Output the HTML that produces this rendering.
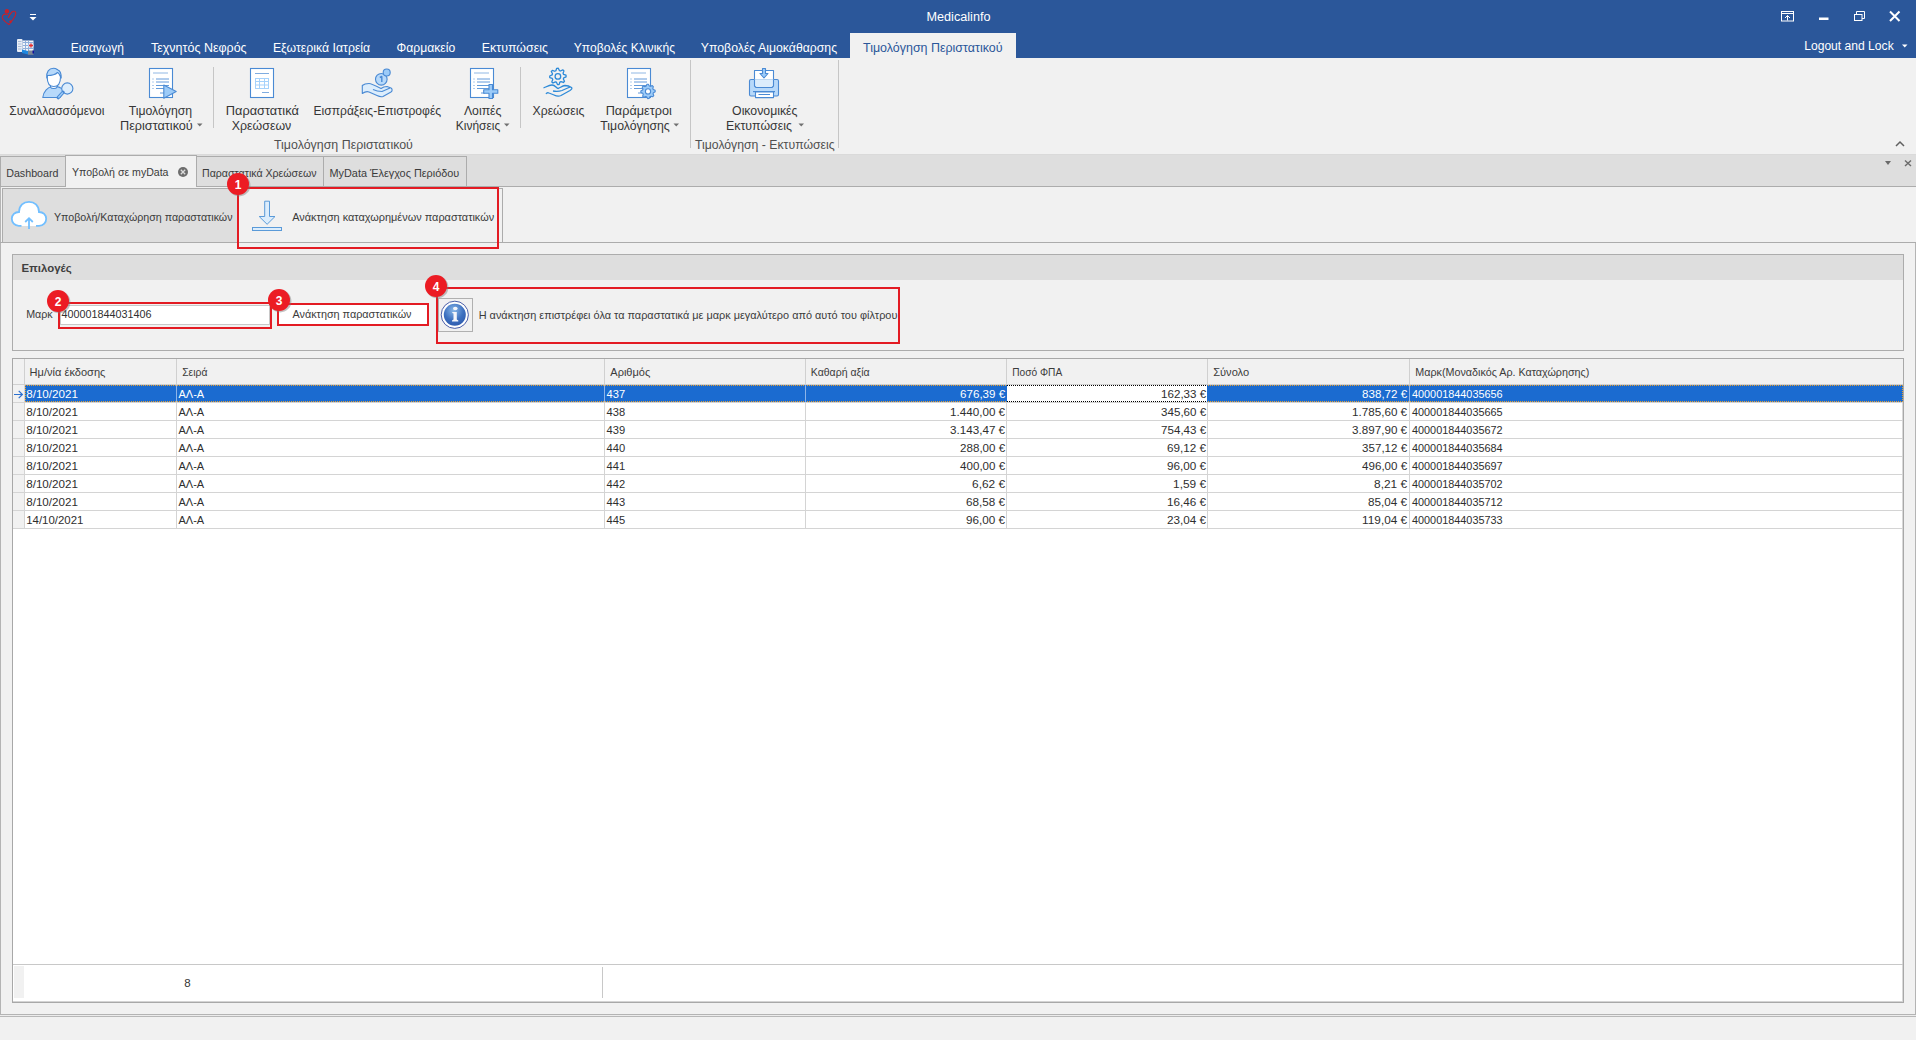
<!DOCTYPE html>
<html><head><meta charset="utf-8"><title>Medicalinfo</title>
<style>
html,body{margin:0;padding:0;width:1916px;height:1040px;overflow:hidden;background:#f1f1f1;}
svg{display:block;font-family:"Liberation Sans",sans-serif;}
svg text{white-space:pre;}
</style></head><body>
<svg width="1916" height="1040" viewBox="0 0 1916 1040">
<rect x="0" y="0" width="1916" height="1040" fill="#f1f1f1" />
<rect x="0" y="0" width="1916" height="58" fill="#2b579a" />
<text x="926.5" y="21" font-size="12.5" fill="#ffffff" text-anchor="start" textLength="64.0" lengthAdjust="spacingAndGlyphs" >Medicalinfo</text>
<g fill="none" stroke="#c8202a" stroke-width="1.1" stroke-linecap="round"><path d="M7.5 14.5 C5 13.5 2 14.5 2.2 17.5 C2.5 20 6 22.5 9 24.5"/><path d="M9 24.5 C12 21 15.5 17 15.8 13.5 C16 11 13.5 10.5 11.5 12.5 C10 14 9 16 8.5 17.5"/></g><circle cx="6.9" cy="11.2" r="2.2" fill="#c8202a"/><circle cx="10.6" cy="21.6" r="1.3" fill="#c8202a"/>
<rect x="30" y="14" width="6" height="1" fill="#ffffff" />
<path d="M29.5 17 L36.5 17 L33 20.5Z" fill="#ffffff"/>
<g fill="none" stroke="#ffffff" stroke-width="1"><rect x="1781.5" y="11.5" width="12" height="9.5"/><line x1="1781.5" y1="13.5" x2="1793.5" y2="13.5"/><path d="M1787.5 20.5 V15.5 M1785 18 L1787.5 15.5 L1790 18"/><rect x="1854.5" y="14.5" width="7.5" height="6"/><path d="M1856.5 14.5 V11.5 H1864.5 V18.5 H1862"/></g><rect x="1819" y="17.5" width="9.5" height="2.5" fill="#ffffff"/><path d="M1890 11.5 L1899.5 21 M1899.5 11.5 L1890 21" stroke="#ffffff" stroke-width="2"/>
<text x="70.8" y="52" font-size="12" fill="#ffffff" text-anchor="start" textLength="53.1" lengthAdjust="spacingAndGlyphs" >Εισαγωγή</text>
<text x="151.0" y="52" font-size="12" fill="#ffffff" text-anchor="start" textLength="95.6" lengthAdjust="spacingAndGlyphs" >Τεχνητός Νεφρός</text>
<text x="272.9" y="52" font-size="12" fill="#ffffff" text-anchor="start" textLength="97.3" lengthAdjust="spacingAndGlyphs" >Εξωτερικά Ιατρεία</text>
<text x="396.5" y="52" font-size="12" fill="#ffffff" text-anchor="start" textLength="58.7" lengthAdjust="spacingAndGlyphs" >Φαρμακείο</text>
<text x="481.8" y="52" font-size="12" fill="#ffffff" text-anchor="start" textLength="66.1" lengthAdjust="spacingAndGlyphs" >Εκτυπώσεις</text>
<text x="573.7" y="52" font-size="12" fill="#ffffff" text-anchor="start" textLength="101.3" lengthAdjust="spacingAndGlyphs" >Υποβολές Κλινικής</text>
<text x="700.8" y="52" font-size="12" fill="#ffffff" text-anchor="start" textLength="136.3" lengthAdjust="spacingAndGlyphs" >Υποβολές Αιμοκάθαρσης</text>
<rect x="850" y="33" width="166" height="25" fill="#f1f1f1" />
<text x="863" y="52" font-size="12" fill="#2b579a" text-anchor="start" textLength="139.5" lengthAdjust="spacingAndGlyphs" >Τιμολόγηση Περιστατικού</text>
<g><rect x="17" y="39" width="5.5" height="13" rx="1" fill="#e8eef7"/><g fill="#a9bcd8"><rect x="18" y="41" width="3.5" height="1"/><rect x="18" y="43.5" width="3.5" height="1"/><rect x="18" y="46" width="3.5" height="1"/><rect x="18" y="48.5" width="3.5" height="1"/></g><rect x="22.5" y="40.5" width="11" height="11" fill="#f2f5fa"/><g fill="#8fb0dc"><rect x="23" y="42" width="10" height="1"/><rect x="23" y="45" width="10" height="1"/><rect x="23" y="48" width="10" height="1"/><rect x="25" y="41" width="1" height="10"/><rect x="28" y="41" width="1" height="10"/></g><circle cx="31" cy="45.5" r="2.6" fill="#cfe0f5"/><path d="M31 43.5 V47.5 M29 45.5 H33" stroke="#e83030" stroke-width="1.3"/><path d="M22 49.5 L28 51 L28 54.5 L22 53Z" fill="#1e88e0"/><rect x="28" y="50.5" width="5.5" height="4.3" fill="#7d8796"/><rect x="32.5" y="50.5" width="1.5" height="3" fill="#1010a0"/></g>
<text x="1804.2" y="50" font-size="12" fill="#ffffff" text-anchor="start" textLength="89.5" lengthAdjust="spacingAndGlyphs" >Logout and Lock</text>
<path d="M1902 44.5 L1907.5 44.5 L1904.75 47.5Z" fill="#ffffff"/>
<rect x="0" y="154" width="1916" height="1" fill="#dadada" />
<rect x="213" y="67" width="1" height="61" fill="#c6c6c6" />
<rect x="520" y="67" width="1" height="61" fill="#c6c6c6" />
<rect x="690" y="60" width="1" height="88" fill="#c6c6c6" />
<rect x="838" y="60" width="1" height="88" fill="#c6c6c6" />
<text x="9.3" y="115" font-size="12" fill="#363636" text-anchor="start" textLength="95.2" lengthAdjust="spacingAndGlyphs" >Συναλλασσόμενοι</text>
<text x="128.7" y="115" font-size="12" fill="#363636" text-anchor="start" textLength="63.5" lengthAdjust="spacingAndGlyphs" >Τιμολόγηση</text>
<text x="120.0" y="129.6" font-size="12" fill="#363636" text-anchor="start" textLength="72.8" lengthAdjust="spacingAndGlyphs" >Περιστατικού</text>
<text x="225.8" y="115" font-size="12" fill="#363636" text-anchor="start" textLength="73.0" lengthAdjust="spacingAndGlyphs" >Παραστατικά</text>
<text x="231.8" y="129.6" font-size="12" fill="#363636" text-anchor="start" textLength="59.5" lengthAdjust="spacingAndGlyphs" >Χρεώσεων</text>
<text x="313.5" y="115" font-size="12" fill="#363636" text-anchor="start" textLength="127.6" lengthAdjust="spacingAndGlyphs" >Εισπράξεις-Επιστροφές</text>
<text x="463.9" y="115" font-size="12" fill="#363636" text-anchor="start" textLength="37.6" lengthAdjust="spacingAndGlyphs" >Λοιπές</text>
<text x="455.8" y="129.6" font-size="12" fill="#363636" text-anchor="start" textLength="44.4" lengthAdjust="spacingAndGlyphs" >Κινήσεις</text>
<text x="532.5" y="115" font-size="12" fill="#363636" text-anchor="start" textLength="51.8" lengthAdjust="spacingAndGlyphs" >Χρεώσεις</text>
<text x="605.7" y="115" font-size="12" fill="#363636" text-anchor="start" textLength="66.1" lengthAdjust="spacingAndGlyphs" >Παράμετροι</text>
<text x="600.3" y="129.6" font-size="12" fill="#363636" text-anchor="start" textLength="69.5" lengthAdjust="spacingAndGlyphs" >Τιμολόγησης</text>
<text x="732.1" y="115" font-size="12" fill="#363636" text-anchor="start" textLength="65.4" lengthAdjust="spacingAndGlyphs" >Οικονομικές</text>
<text x="726.0" y="129.6" font-size="12" fill="#363636" text-anchor="start" textLength="65.9" lengthAdjust="spacingAndGlyphs" >Εκτυπώσεις</text>
<text x="274" y="149" font-size="12" fill="#505050" text-anchor="start" textLength="138.9" lengthAdjust="spacingAndGlyphs" >Τιμολόγηση Περιστατικού</text>
<text x="695" y="149" font-size="12" fill="#505050" text-anchor="start" textLength="139.6" lengthAdjust="spacingAndGlyphs" >Τιμολόγηση - Εκτυπώσεις</text>
<path d="M197 123.5 L202.5 123.5 L199.75 126.5Z" fill="#707070"/>
<path d="M504 123.5 L509.5 123.5 L506.75 126.5Z" fill="#707070"/>
<path d="M673.5 123.5 L679.0 123.5 L676.25 126.5Z" fill="#707070"/>
<path d="M798.5 123.5 L804.0 123.5 L801.25 126.5Z" fill="#707070"/>
<path d="M1896 146 L1900 142 L1904 146" fill="none" stroke="#606060" stroke-width="1.5"/>
<g stroke="#4a8ad4" stroke-width="1.1" stroke-linejoin="round"><path d="M42.8 97.5 C43.5 91 48 87.3 52 86.5 L57 86.5 C60 87.3 63 89 64.5 91 L60 97.5 Z" fill="#b7d9fa"/><path d="M50.5 84 L50.5 87.2 C51.5 89 56 89 57 87.2 L57 84Z" fill="#ffffff"/><path d="M47.2 77 C47.2 83 49.5 86.5 53.8 86.5 C58 86.5 60.5 83 60.5 77 C60.5 72 58 69 53.8 69 C49.5 69 47.2 72 47.2 77Z" fill="#ffffff"/><path d="M46.8 78 C46 72 49 68.3 53.5 68.3 C56 68.3 57 69.5 58 70 C60.5 71 61.3 73 61.2 78 C59.8 75 59 73 57.5 72.5 C55 75 51.5 75.5 47.5 75.5Z" fill="#b7d9fa"/><circle cx="67.3" cy="88.5" r="5.6" fill="#dcedfc"/><path d="M63 92.3 L58.2 97.6" stroke-width="3.4" stroke="#4a8ad4" stroke-linecap="round"/><path d="M62.8 92.5 L58.4 97.4" stroke-width="1.5" stroke="#9ccbf8"/></g>
<rect x="149.5" y="68.5" width="23" height="29" fill="#ffffff" stroke="#4a8ad4" stroke-width="1.1"/><g stroke="#4a8ad4" stroke-width="1" opacity="0.85"><line x1="153" y1="73" x2="168" y2="73" opacity="0.7"/><line x1="152.5" y1="79" x2="153.5" y2="79"/><line x1="156" y1="79" x2="169" y2="79"/><line x1="152.5" y1="82" x2="153.5" y2="82"/><line x1="156" y1="82" x2="169" y2="82"/><line x1="152.5" y1="85.5" x2="153.5" y2="85.5"/><line x1="156" y1="85.5" x2="169" y2="85.5"/><line x1="152.5" y1="88.5" x2="153.5" y2="88.5"/><line x1="156" y1="88.5" x2="169" y2="88.5"/><line x1="160" y1="93" x2="164" y2="93"/></g>
<path d="M163.8 85 L176.2 91.6 L163.8 98.2Z" fill="#9ccbf8" stroke="#4a8ad4" stroke-width="1.1" stroke-linejoin="round"/>
<rect x="250.5" y="68.5" width="23" height="29" fill="#ffffff" stroke="#4a8ad4" stroke-width="1.1"/><line x1="255" y1="73.5" x2="269" y2="73.5" stroke="#4a8ad4" stroke-width="1" opacity="0.7"/><line x1="262" y1="92.5" x2="269" y2="92.5" stroke="#4a8ad4" stroke-width="1" opacity="0.7"/><g fill="#a6d2fb"><rect x="255" y="78" width="14" height="1"/><rect x="255" y="81" width="14" height="1"/><rect x="255" y="84.5" width="14" height="1"/><rect x="255" y="88" width="14" height="1"/><rect x="255" y="78" width="1" height="11"/><rect x="259" y="78" width="1" height="11"/><rect x="264" y="78" width="1" height="11"/><rect x="268" y="78" width="1" height="11"/></g>
<g stroke="#4a8ad4" stroke-width="1.1" stroke-linejoin="round"><path d="M362.3 85.5 C364 84 366 83.5 369 83.5 C371 83.5 378 87 381 88.5 C383 87 385 86.5 387 86.5 L391 88 C392.5 89 392.5 91 391 92 L383 96.5 C381 97 380 97 377 95.5 L369 92 C366.5 91 364.5 92 362.3 93.5Z" fill="#dcedfc"/><path d="M373 89.5 C376 91 378 91.5 382 91.5 L390 88" fill="none"/><circle cx="381.3" cy="79.3" r="5.8" fill="#b7d9fa"/><circle cx="386.7" cy="72.5" r="3.5" fill="#9ccbf8"/><path d="M379.8 77.5 L381.8 76.5 L381.8 82" fill="none" stroke-width="1.4"/></g>
<rect x="470.5" y="68.5" width="23" height="29" fill="#ffffff" stroke="#4a8ad4" stroke-width="1.1"/><g stroke="#4a8ad4" stroke-width="1" opacity="0.85"><line x1="474" y1="73" x2="489" y2="73" opacity="0.7"/><line x1="473.5" y1="79" x2="474.5" y2="79"/><line x1="477" y1="79" x2="490" y2="79"/><line x1="473.5" y1="82" x2="474.5" y2="82"/><line x1="477" y1="82" x2="490" y2="82"/><line x1="473.5" y1="85.5" x2="474.5" y2="85.5"/><line x1="477" y1="85.5" x2="490" y2="85.5"/><line x1="473.5" y1="88.5" x2="474.5" y2="88.5"/><line x1="477" y1="88.5" x2="490" y2="88.5"/><line x1="481" y1="93" x2="485" y2="93"/></g>
<path d="M489 84.5 L492.5 84.5 L492.5 89.8 L497.8 89.8 L497.8 93.2 L492.5 93.2 L492.5 98.5 L489 98.5 L489 93.2 L483.7 93.2 L483.7 89.8 L489 89.8Z" fill="#9ccbf8" stroke="#4a8ad4" stroke-width="1.1" stroke-linejoin="round"/>
<g fill="none" stroke="#2d8ad8" stroke-width="1.3" stroke-linejoin="round"><path d="M556.70,68.29 L558.30,68.21 L559.36,70.58 L560.47,70.98 L562.78,69.81 L563.98,70.89 L563.05,73.32 L563.55,74.38 L566.01,75.20 L566.09,76.80 L563.72,77.86 L563.32,78.97 L564.49,81.28 L563.41,82.48 L560.98,81.55 L559.92,82.05 L559.10,84.51 L557.50,84.59 L556.44,82.22 L555.33,81.82 L553.02,82.99 L551.82,81.91 L552.75,79.48 L552.25,78.42 L549.79,77.60 L549.71,76.00 L552.08,74.94 L552.48,73.83 L551.31,71.52 L552.39,70.32 L554.82,71.25 L555.88,70.75Z"/><circle cx="557.9" cy="76.4" r="2.8"/><path d="M543.5 88 C546 87 549 85 552 85 C555 85 556.5 88 558 88.5 C560 88 562 86 565 85.5 C567 85.5 570 86.5 571.5 87.5 C572.5 88.5 571.5 89.5 570 90.5 L561 95.5 C559 96.5 557 96.5 554 95 L549 93 C548 92.5 546.5 93 546 94"/><path d="M553 91 C556 91.5 559 91.5 562 90.5 L570 87"/></g>
<rect x="627.5" y="68.5" width="23" height="29" fill="#ffffff" stroke="#4a8ad4" stroke-width="1.1"/><g stroke="#4a8ad4" stroke-width="1" opacity="0.85"><line x1="631" y1="73" x2="646" y2="73" opacity="0.7"/><line x1="630.5" y1="79" x2="631.5" y2="79"/><line x1="634" y1="79" x2="647" y2="79"/><line x1="630.5" y1="82" x2="631.5" y2="82"/><line x1="634" y1="82" x2="647" y2="82"/><line x1="630.5" y1="85.5" x2="631.5" y2="85.5"/><line x1="634" y1="85.5" x2="647" y2="85.5"/><line x1="630.5" y1="88.5" x2="631.5" y2="88.5"/><line x1="634" y1="88.5" x2="647" y2="88.5"/><line x1="638" y1="93" x2="642" y2="93"/></g>
<path d="M646.94,84.28 L648.35,84.21 L649.36,85.97 L650.39,86.34 L652.29,85.62 L653.33,86.56 L652.80,88.52 L653.27,89.51 L655.12,90.34 L655.19,91.75 L653.43,92.76 L653.06,93.79 L653.78,95.69 L652.84,96.73 L650.88,96.20 L649.89,96.67 L649.06,98.52 L647.65,98.59 L646.64,96.83 L645.61,96.46 L643.71,97.18 L642.67,96.24 L643.20,94.28 L642.73,93.29 L640.88,92.46 L640.81,91.05 L642.57,90.04 L642.94,89.01 L642.22,87.11 L643.16,86.07 L645.12,86.60 L646.11,86.13Z" fill="#9ccbf8" stroke="#4a8ad4" stroke-width="1.1" stroke-linejoin="round"/><circle cx="648" cy="91.4" r="2.6" fill="#ffffff" stroke="#4a8ad4" stroke-width="1.1"/>
<g stroke="#4a8ad4" stroke-width="1.1" stroke-linejoin="round"><rect x="749.5" y="79.5" width="29" height="16.5" rx="1.5" fill="#b7d9fa"/><path d="M754.5 79.5 L754.5 70.5 L773.5 70.5 L773.5 79.5" fill="#ffffff"/><path d="M754.5 79.5 L754.5 86 L756 87.5 L772 87.5 L773.5 86 L773.5 79.5" fill="#dcedfc"/><rect x="753" y="91" width="22" height="1.2" fill="#4a8ad4" stroke="none"/><rect x="755.5" y="92" width="18" height="5.6" fill="#ffffff"/><line x1="758.5" y1="94.5" x2="770" y2="94.5" stroke-width="1"/><path d="M762.5 68.5 L765.5 68.5 L765.5 73.5 L768 73.5 L764 78 L760 73.5 L762.5 73.5Z" fill="#9ccbf8"/></g>
<rect x="0" y="155" width="1916" height="31" fill="#dedede" />
<rect x="0" y="186" width="1916" height="1" fill="#acacac" />
<rect x="0" y="156" width="66" height="31" fill="#dedede" />
<rect x="0" y="156" width="66" height="1" fill="#acacac" />
<rect x="0" y="186" width="66" height="1" fill="#acacac" />
<rect x="0" y="156" width="1" height="31" fill="#acacac" />
<rect x="65" y="156" width="1" height="31" fill="#acacac" />
<rect x="196" y="156" width="128" height="31" fill="#dedede" />
<rect x="196" y="156" width="128" height="1" fill="#acacac" />
<rect x="196" y="186" width="128" height="1" fill="#acacac" />
<rect x="196" y="156" width="1" height="31" fill="#acacac" />
<rect x="323" y="156" width="1" height="31" fill="#acacac" />
<rect x="323" y="156" width="144" height="31" fill="#dedede" />
<rect x="323" y="156" width="144" height="1" fill="#acacac" />
<rect x="323" y="186" width="144" height="1" fill="#acacac" />
<rect x="323" y="156" width="1" height="31" fill="#acacac" />
<rect x="466" y="156" width="1" height="31" fill="#acacac" />
<rect x="65" y="155" width="132" height="32" fill="#f1f1f1" />
<rect x="65" y="155" width="132" height="1" fill="#acacac" />
<rect x="65" y="155" width="1" height="32" fill="#acacac" />
<rect x="196" y="155" width="1" height="32" fill="#acacac" />
<text x="6.2" y="177" font-size="11" fill="#3b3b3b" text-anchor="start" textLength="52.3" lengthAdjust="spacingAndGlyphs" >Dashboard</text>
<text x="72" y="176" font-size="11" fill="#3b3b3b" text-anchor="start" textLength="96.5" lengthAdjust="spacingAndGlyphs" >Υποβολή σε myData</text>
<text x="202" y="177" font-size="11" fill="#3b3b3b" text-anchor="start" textLength="114.5" lengthAdjust="spacingAndGlyphs" >Παραστατικά Χρεώσεων</text>
<text x="329.5" y="177" font-size="11" fill="#3b3b3b" text-anchor="start" textLength="129.8" lengthAdjust="spacingAndGlyphs" >MyData Έλεγχος Περιόδου</text>
<circle cx="183" cy="172" r="5" fill="#6d6d6d"/><path d="M180.8 169.8 L185.2 174.2 M185.2 169.8 L180.8 174.2" stroke="#dcdcdc" stroke-width="1.3"/>
<path d="M1885 161 L1891 161 L1888 165Z" fill="#6a6a6a"/>
<path d="M1905 160.5 L1911 166 M1911 160.5 L1905 166" stroke="#6a6a6a" stroke-width="1.4"/>
<rect x="0" y="187" width="1916" height="827" fill="#f1f1f1" />
<rect x="0" y="187" width="1" height="828" fill="#b4b4b4" />
<rect x="1915" y="242" width="1" height="773" fill="#b4b4b4" />
<rect x="0" y="242" width="1916" height="1" fill="#acacac" />
<rect x="0" y="1014" width="1916" height="1" fill="#b4b4b4" />
<rect x="0" y="1016" width="1916" height="1" fill="#b8b8b8" />
<rect x="0" y="1015" width="1916" height="1" fill="#ececec" />
<rect x="2" y="188" width="501" height="55" fill="#dedede" />
<rect x="2" y="188" width="501" height="1" fill="#acacac" />
<rect x="2" y="242" width="501" height="1" fill="#acacac" />
<rect x="2" y="188" width="1" height="55" fill="#acacac" />
<rect x="502" y="188" width="1" height="55" fill="#acacac" />
<rect x="238" y="189" width="264" height="53" fill="#f1f1f1" />
<path d="M19 226 C14.5 226 11.8 222.5 11.8 218.8 C11.8 215 14.8 212 19 212 C19.2 205.5 23.5 201.8 29 201.8 C34.5 201.8 38.8 205.5 39 212 C43.2 212 46.2 215 46.2 218.8 C46.2 222.5 43.5 226 39 226 Z" fill="#ffffff"/><path d="M21.5 225.8 L18.8 225.8 C14.5 225.8 11.8 222.5 11.8 218.8 C11.8 215 14.8 212 19 212 C19.2 205.5 23.5 201.8 29 201.8 C34.5 201.8 38.8 205.5 39 212 C43.2 212 46.2 215 46.2 218.8 C46.2 222.5 43.5 225.8 39 225.8 L36 225.8" fill="none" stroke="#72bfff" stroke-width="1.8"/><path d="M29 229 L29 218.5 M25.2 222 L29 218.2 L32.8 222" fill="none" stroke="#72bfff" stroke-width="1.8"/>
<text x="54" y="221" font-size="11" fill="#3b3b3b" text-anchor="start" textLength="178.5" lengthAdjust="spacingAndGlyphs" >Υποβολή/Καταχώρηση παραστατικών</text>
<path d="M264.7 201.2 L269.5 201.2 L269.5 216.5 L275 216.5 L267.1 224.3 L259.2 216.5 L264.7 216.5Z" fill="#dcedfc" stroke="#5a9ad8" stroke-width="1"/><rect x="252.5" y="227.5" width="29" height="3" fill="#dcedfc" stroke="#5a9ad8" stroke-width="1"/>
<text x="292.2" y="221" font-size="11" fill="#3b3b3b" text-anchor="start" textLength="202.0" lengthAdjust="spacingAndGlyphs" >Ανάκτηση καταχωρημένων παραστατικών</text>
<rect x="12" y="254" width="1892" height="97" fill="#f1f1f1" />
<rect x="12" y="254" width="1892" height="1" fill="#acacac" />
<rect x="12" y="350" width="1892" height="1" fill="#acacac" />
<rect x="12" y="254" width="1" height="97" fill="#acacac" />
<rect x="1903" y="254" width="1" height="97" fill="#acacac" />
<rect x="13" y="255" width="1890" height="25" fill="#dedede" />
<text x="21.5" y="271.5" font-size="11" fill="#404040" font-weight="bold" text-anchor="start" textLength="50.2" lengthAdjust="spacingAndGlyphs" >Επιλογές</text>
<text x="26.2" y="318" font-size="11" fill="#3b3b3b" text-anchor="start" textLength="26.5" lengthAdjust="spacingAndGlyphs" >Μαρκ</text>
<rect x="60" y="305" width="210" height="20" fill="#ffffff" />
<rect x="60" y="305" width="210" height="1" fill="#c8c8c8" />
<rect x="60" y="324" width="210" height="1" fill="#c8c8c8" />
<rect x="60" y="305" width="1" height="20" fill="#c8c8c8" />
<rect x="269" y="305" width="1" height="20" fill="#c8c8c8" />
<text x="61.5" y="318" font-size="11" fill="#303030" text-anchor="start" textLength="90.0" lengthAdjust="spacingAndGlyphs" >400001844031406</text>
<rect x="279" y="305" width="149" height="19" fill="#ffffff" />
<text x="292.5" y="318" font-size="11" fill="#3b3b3b" text-anchor="start" textLength="119.0" lengthAdjust="spacingAndGlyphs" >Ανάκτηση παραστατικών</text>
<rect x="438" y="298" width="35" height="34" fill="#f1f1f1" />
<rect x="438" y="298" width="35" height="1" fill="#b0b0b0" />
<rect x="438" y="331" width="35" height="1" fill="#b0b0b0" />
<rect x="438" y="298" width="1" height="34" fill="#b0b0b0" />
<rect x="472" y="298" width="1" height="34" fill="#b0b0b0" />
<defs><radialGradient id="ig" cx="0.45" cy="0.3" r="0.8"><stop offset="0" stop-color="#8ab8e8"/><stop offset="0.55" stop-color="#3c70c0"/><stop offset="1" stop-color="#2c55a8"/></radialGradient></defs><circle cx="454.8" cy="314.8" r="13.6" fill="#ffffff" stroke="#4a5ea8" stroke-width="1"/><circle cx="454.8" cy="314.8" r="11" fill="url(#ig)"/><ellipse cx="455.3" cy="308.5" rx="2.3" ry="1.7" fill="#f4f6fb"/><path d="M452.3 312 L456.8 312 L456.8 319.5 L458.3 320.6 L458.3 321.5 L452 321.5 L452 320.6 L453.5 319.5 L453.5 313.5 L452.3 313Z" fill="#f4f6fb"/>
<text x="478.7" y="319" font-size="11" fill="#3b3b3b" text-anchor="start" textLength="418.7" lengthAdjust="spacingAndGlyphs" >Η ανάκτηση επιστρέφει όλα τα παραστατικά με μαρκ μεγαλύτερο από αυτό του φίλτρου</text>
<rect x="12" y="358" width="1892" height="645" fill="#ffffff" />
<rect x="12" y="358" width="1892" height="1" fill="#a8a8a8" />
<rect x="12" y="1002" width="1892" height="1" fill="#a8a8a8" />
<rect x="12" y="358" width="1" height="645" fill="#a8a8a8" />
<rect x="1903" y="358" width="1" height="645" fill="#a8a8a8" />
<rect x="1902" y="359" width="1" height="643" fill="#d8d8d8" />
<rect x="13" y="1001" width="1890" height="1" fill="#d4d4d4" />
<rect x="13" y="359" width="1890" height="26" fill="#f1f1f1" />
<rect x="24" y="359" width="1" height="26" fill="#d0d0d0" />
<rect x="176" y="359" width="1" height="26" fill="#d0d0d0" />
<rect x="604" y="359" width="1" height="26" fill="#d0d0d0" />
<rect x="805" y="359" width="1" height="26" fill="#d0d0d0" />
<rect x="1006" y="359" width="1" height="26" fill="#d0d0d0" />
<rect x="1207" y="359" width="1" height="26" fill="#d0d0d0" />
<rect x="1409" y="359" width="1" height="26" fill="#d0d0d0" />
<rect x="13" y="384" width="1890" height="1" fill="#d0d0d0" />
<text x="29.6" y="375.7" font-size="11" fill="#3b3b3b" text-anchor="start" textLength="75.8" lengthAdjust="spacingAndGlyphs" >Ημ/νία έκδοσης</text>
<text x="182.2" y="375.7" font-size="11" fill="#3b3b3b" text-anchor="start" textLength="25.2" lengthAdjust="spacingAndGlyphs" >Σειρά</text>
<text x="610.3" y="375.7" font-size="11" fill="#3b3b3b" text-anchor="start" textLength="40.0" lengthAdjust="spacingAndGlyphs" >Αριθμός</text>
<text x="810.8" y="375.7" font-size="11" fill="#3b3b3b" text-anchor="start" textLength="58.8" lengthAdjust="spacingAndGlyphs" >Καθαρή αξία</text>
<text x="1012.2" y="375.7" font-size="11" fill="#3b3b3b" text-anchor="start" textLength="50.0" lengthAdjust="spacingAndGlyphs" >Ποσό ΦΠΑ</text>
<text x="1213.2" y="375.7" font-size="11" fill="#3b3b3b" text-anchor="start" textLength="36.0" lengthAdjust="spacingAndGlyphs" >Σύνολο</text>
<text x="1415.3" y="375.7" font-size="11" fill="#3b3b3b" text-anchor="start" textLength="174.0" lengthAdjust="spacingAndGlyphs" >Μαρκ(Μοναδικός Αρ. Καταχώρησης)</text>
<rect x="13" y="385" width="11" height="144" fill="#f1f1f1" />
<rect x="13" y="402" width="1890" height="1" fill="#d4d4d4" />
<rect x="13" y="420" width="1890" height="1" fill="#d4d4d4" />
<rect x="13" y="438" width="1890" height="1" fill="#d4d4d4" />
<rect x="13" y="456" width="1890" height="1" fill="#d4d4d4" />
<rect x="13" y="474" width="1890" height="1" fill="#d4d4d4" />
<rect x="13" y="492" width="1890" height="1" fill="#d4d4d4" />
<rect x="13" y="510" width="1890" height="1" fill="#d4d4d4" />
<rect x="13" y="528" width="1890" height="1" fill="#d4d4d4" />
<rect x="24" y="385" width="1" height="144" fill="#d4d4d4" />
<rect x="176" y="385" width="1" height="144" fill="#d4d4d4" />
<rect x="604" y="385" width="1" height="144" fill="#d4d4d4" />
<rect x="805" y="385" width="1" height="144" fill="#d4d4d4" />
<rect x="1006" y="385" width="1" height="144" fill="#d4d4d4" />
<rect x="1207" y="385" width="1" height="144" fill="#d4d4d4" />
<rect x="1409" y="385" width="1" height="144" fill="#d4d4d4" />
<rect x="25" y="385" width="1878" height="17" fill="#1b6bd0" />
<rect x="1007" y="385" width="200" height="17" fill="#ffffff" />
<g shape-rendering="crispEdges"><line x1="25" y1="385.5" x2="1006" y2="385.5" stroke="#e8a030" stroke-width="1" stroke-dasharray="1,1"/><line x1="25" y1="401.5" x2="1006" y2="401.5" stroke="#e8a030" stroke-width="1" stroke-dasharray="1,1"/><line x1="1208" y1="385.5" x2="1903" y2="385.5" stroke="#e8a030" stroke-width="1" stroke-dasharray="1,1"/><line x1="1208" y1="401.5" x2="1903" y2="401.5" stroke="#e8a030" stroke-width="1" stroke-dasharray="1,1"/><line x1="1902.5" y1="385" x2="1902.5" y2="402" stroke="#e8a030" stroke-width="1" stroke-dasharray="1,1"/><line x1="25.5" y1="385" x2="25.5" y2="402" stroke="#e8a030" stroke-width="1" stroke-dasharray="1,1"/><line x1="1007" y1="385.5" x2="1207" y2="385.5" stroke="#000" stroke-width="1" stroke-dasharray="1,1"/><line x1="1007" y1="401.5" x2="1207" y2="401.5" stroke="#000" stroke-width="1" stroke-dasharray="1,1"/></g>
<rect x="176" y="385" width="1" height="17" fill="#8db4e8" />
<rect x="604" y="385" width="1" height="17" fill="#8db4e8" />
<rect x="805" y="385" width="1" height="17" fill="#8db4e8" />
<rect x="1409" y="385" width="1" height="17" fill="#8db4e8" />
<path d="M14 394.5 L22.3 394.5 M18.7 390.8 L22.4 394.5 L18.7 398.2" fill="none" stroke="#2a6fd0" stroke-width="1.2"/>
<text x="26.2" y="398" font-size="11" fill="#ffffff" text-anchor="start" textLength="51.8" lengthAdjust="spacingAndGlyphs" >8/10/2021</text>
<text x="178.5" y="398" font-size="11" fill="#ffffff" text-anchor="start" >ΑΛ-Α</text>
<text x="606.5" y="398" font-size="11" fill="#ffffff" text-anchor="start" textLength="18.6" lengthAdjust="spacingAndGlyphs" >437</text>
<text x="1005.1" y="398" font-size="11" fill="#ffffff" text-anchor="end" textLength="45.0" lengthAdjust="spacingAndGlyphs" >676,39 €</text>
<text x="1206.1" y="398" font-size="11" fill="#2e2e2e" text-anchor="end" textLength="45.0" lengthAdjust="spacingAndGlyphs" >162,33 €</text>
<text x="1407.1" y="398" font-size="11" fill="#ffffff" text-anchor="end" textLength="45.0" lengthAdjust="spacingAndGlyphs" >838,72 €</text>
<text x="1412" y="398" font-size="11" fill="#ffffff" text-anchor="start" textLength="90.6" lengthAdjust="spacingAndGlyphs" >400001844035656</text>
<text x="26.2" y="416" font-size="11" fill="#2e2e2e" text-anchor="start" textLength="51.8" lengthAdjust="spacingAndGlyphs" >8/10/2021</text>
<text x="178.5" y="416" font-size="11" fill="#2e2e2e" text-anchor="start" >ΑΛ-Α</text>
<text x="606.5" y="416" font-size="11" fill="#2e2e2e" text-anchor="start" textLength="18.6" lengthAdjust="spacingAndGlyphs" >438</text>
<text x="1005.1" y="416" font-size="11" fill="#2e2e2e" text-anchor="end" textLength="55.0" lengthAdjust="spacingAndGlyphs" >1.440,00 €</text>
<text x="1206.1" y="416" font-size="11" fill="#2e2e2e" text-anchor="end" textLength="45.0" lengthAdjust="spacingAndGlyphs" >345,60 €</text>
<text x="1407.1" y="416" font-size="11" fill="#2e2e2e" text-anchor="end" textLength="55.0" lengthAdjust="spacingAndGlyphs" >1.785,60 €</text>
<text x="1412" y="416" font-size="11" fill="#2e2e2e" text-anchor="start" textLength="90.6" lengthAdjust="spacingAndGlyphs" >400001844035665</text>
<text x="26.2" y="434" font-size="11" fill="#2e2e2e" text-anchor="start" textLength="51.8" lengthAdjust="spacingAndGlyphs" >8/10/2021</text>
<text x="178.5" y="434" font-size="11" fill="#2e2e2e" text-anchor="start" >ΑΛ-Α</text>
<text x="606.5" y="434" font-size="11" fill="#2e2e2e" text-anchor="start" textLength="18.6" lengthAdjust="spacingAndGlyphs" >439</text>
<text x="1005.1" y="434" font-size="11" fill="#2e2e2e" text-anchor="end" textLength="55.0" lengthAdjust="spacingAndGlyphs" >3.143,47 €</text>
<text x="1206.1" y="434" font-size="11" fill="#2e2e2e" text-anchor="end" textLength="45.0" lengthAdjust="spacingAndGlyphs" >754,43 €</text>
<text x="1407.1" y="434" font-size="11" fill="#2e2e2e" text-anchor="end" textLength="55.0" lengthAdjust="spacingAndGlyphs" >3.897,90 €</text>
<text x="1412" y="434" font-size="11" fill="#2e2e2e" text-anchor="start" textLength="90.6" lengthAdjust="spacingAndGlyphs" >400001844035672</text>
<text x="26.2" y="452" font-size="11" fill="#2e2e2e" text-anchor="start" textLength="51.8" lengthAdjust="spacingAndGlyphs" >8/10/2021</text>
<text x="178.5" y="452" font-size="11" fill="#2e2e2e" text-anchor="start" >ΑΛ-Α</text>
<text x="606.5" y="452" font-size="11" fill="#2e2e2e" text-anchor="start" textLength="18.6" lengthAdjust="spacingAndGlyphs" >440</text>
<text x="1005.1" y="452" font-size="11" fill="#2e2e2e" text-anchor="end" textLength="45.0" lengthAdjust="spacingAndGlyphs" >288,00 €</text>
<text x="1206.1" y="452" font-size="11" fill="#2e2e2e" text-anchor="end" textLength="39.0" lengthAdjust="spacingAndGlyphs" >69,12 €</text>
<text x="1407.1" y="452" font-size="11" fill="#2e2e2e" text-anchor="end" textLength="45.0" lengthAdjust="spacingAndGlyphs" >357,12 €</text>
<text x="1412" y="452" font-size="11" fill="#2e2e2e" text-anchor="start" textLength="90.6" lengthAdjust="spacingAndGlyphs" >400001844035684</text>
<text x="26.2" y="470" font-size="11" fill="#2e2e2e" text-anchor="start" textLength="51.8" lengthAdjust="spacingAndGlyphs" >8/10/2021</text>
<text x="178.5" y="470" font-size="11" fill="#2e2e2e" text-anchor="start" >ΑΛ-Α</text>
<text x="606.5" y="470" font-size="11" fill="#2e2e2e" text-anchor="start" textLength="18.6" lengthAdjust="spacingAndGlyphs" >441</text>
<text x="1005.1" y="470" font-size="11" fill="#2e2e2e" text-anchor="end" textLength="45.0" lengthAdjust="spacingAndGlyphs" >400,00 €</text>
<text x="1206.1" y="470" font-size="11" fill="#2e2e2e" text-anchor="end" textLength="39.0" lengthAdjust="spacingAndGlyphs" >96,00 €</text>
<text x="1407.1" y="470" font-size="11" fill="#2e2e2e" text-anchor="end" textLength="45.0" lengthAdjust="spacingAndGlyphs" >496,00 €</text>
<text x="1412" y="470" font-size="11" fill="#2e2e2e" text-anchor="start" textLength="90.6" lengthAdjust="spacingAndGlyphs" >400001844035697</text>
<text x="26.2" y="488" font-size="11" fill="#2e2e2e" text-anchor="start" textLength="51.8" lengthAdjust="spacingAndGlyphs" >8/10/2021</text>
<text x="178.5" y="488" font-size="11" fill="#2e2e2e" text-anchor="start" >ΑΛ-Α</text>
<text x="606.5" y="488" font-size="11" fill="#2e2e2e" text-anchor="start" textLength="18.6" lengthAdjust="spacingAndGlyphs" >442</text>
<text x="1005.1" y="488" font-size="11" fill="#2e2e2e" text-anchor="end" textLength="33.0" lengthAdjust="spacingAndGlyphs" >6,62 €</text>
<text x="1206.1" y="488" font-size="11" fill="#2e2e2e" text-anchor="end" textLength="33.0" lengthAdjust="spacingAndGlyphs" >1,59 €</text>
<text x="1407.1" y="488" font-size="11" fill="#2e2e2e" text-anchor="end" textLength="33.0" lengthAdjust="spacingAndGlyphs" >8,21 €</text>
<text x="1412" y="488" font-size="11" fill="#2e2e2e" text-anchor="start" textLength="90.6" lengthAdjust="spacingAndGlyphs" >400001844035702</text>
<text x="26.2" y="506" font-size="11" fill="#2e2e2e" text-anchor="start" textLength="51.8" lengthAdjust="spacingAndGlyphs" >8/10/2021</text>
<text x="178.5" y="506" font-size="11" fill="#2e2e2e" text-anchor="start" >ΑΛ-Α</text>
<text x="606.5" y="506" font-size="11" fill="#2e2e2e" text-anchor="start" textLength="18.6" lengthAdjust="spacingAndGlyphs" >443</text>
<text x="1005.1" y="506" font-size="11" fill="#2e2e2e" text-anchor="end" textLength="39.0" lengthAdjust="spacingAndGlyphs" >68,58 €</text>
<text x="1206.1" y="506" font-size="11" fill="#2e2e2e" text-anchor="end" textLength="39.0" lengthAdjust="spacingAndGlyphs" >16,46 €</text>
<text x="1407.1" y="506" font-size="11" fill="#2e2e2e" text-anchor="end" textLength="39.0" lengthAdjust="spacingAndGlyphs" >85,04 €</text>
<text x="1412" y="506" font-size="11" fill="#2e2e2e" text-anchor="start" textLength="90.6" lengthAdjust="spacingAndGlyphs" >400001844035712</text>
<text x="26.2" y="524" font-size="11" fill="#2e2e2e" text-anchor="start" textLength="57.2" lengthAdjust="spacingAndGlyphs" >14/10/2021</text>
<text x="178.5" y="524" font-size="11" fill="#2e2e2e" text-anchor="start" >ΑΛ-Α</text>
<text x="606.5" y="524" font-size="11" fill="#2e2e2e" text-anchor="start" textLength="18.6" lengthAdjust="spacingAndGlyphs" >445</text>
<text x="1005.1" y="524" font-size="11" fill="#2e2e2e" text-anchor="end" textLength="39.0" lengthAdjust="spacingAndGlyphs" >96,00 €</text>
<text x="1206.1" y="524" font-size="11" fill="#2e2e2e" text-anchor="end" textLength="39.0" lengthAdjust="spacingAndGlyphs" >23,04 €</text>
<text x="1407.1" y="524" font-size="11" fill="#2e2e2e" text-anchor="end" textLength="45.0" lengthAdjust="spacingAndGlyphs" >119,04 €</text>
<text x="1412" y="524" font-size="11" fill="#2e2e2e" text-anchor="start" textLength="90.6" lengthAdjust="spacingAndGlyphs" >400001844035733</text>
<rect x="13" y="964" width="1890" height="1" fill="#c8c8c8" />
<rect x="14" y="966" width="10" height="32" fill="#f1f1f1" />
<rect x="602" y="967" width="1" height="31" fill="#c8c8c8" />
<text x="184.2" y="987" font-size="11" fill="#333333" text-anchor="start" textLength="6.4" lengthAdjust="spacingAndGlyphs" >8</text>
<rect x="238" y="188" width="260" height="60" fill="none" stroke="#e31b23" stroke-width="2"/>
<rect x="59" y="303" width="212" height="25" fill="none" stroke="#e31b23" stroke-width="2"/>
<rect x="278" y="304" width="150" height="21" fill="none" stroke="#e31b23" stroke-width="2"/>
<rect x="437" y="288" width="462" height="55" fill="none" stroke="#e31b23" stroke-width="2"/>
<circle cx="239.2" cy="185.2" r="11.2" fill="#7a7a7a" opacity="0.45"/><circle cx="238" cy="184" r="11" fill="#ec1c24"/><text x="238" y="188.5" font-size="12" font-weight="bold" fill="#ffffff" text-anchor="middle">1</text>
<circle cx="59.2" cy="302.2" r="11.2" fill="#7a7a7a" opacity="0.45"/><circle cx="58" cy="301" r="11" fill="#ec1c24"/><text x="58" y="305.5" font-size="12" font-weight="bold" fill="#ffffff" text-anchor="middle">2</text>
<circle cx="280.2" cy="301.2" r="11.2" fill="#7a7a7a" opacity="0.45"/><circle cx="279" cy="300" r="11" fill="#ec1c24"/><text x="279" y="304.5" font-size="12" font-weight="bold" fill="#ffffff" text-anchor="middle">3</text>
<circle cx="437.2" cy="287.2" r="11.2" fill="#7a7a7a" opacity="0.45"/><circle cx="436" cy="286" r="11" fill="#ec1c24"/><text x="436" y="290.5" font-size="12" font-weight="bold" fill="#ffffff" text-anchor="middle">4</text>
</svg>
</body></html>
